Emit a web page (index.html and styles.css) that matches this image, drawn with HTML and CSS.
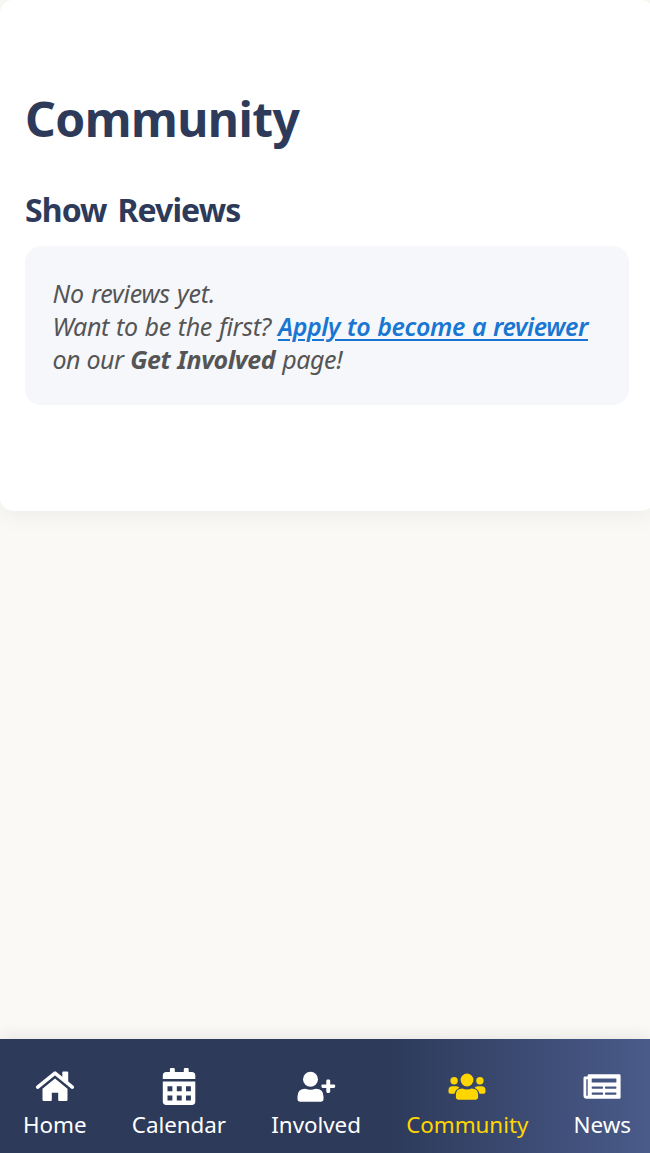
FILE: index.html
```html
<!DOCTYPE html>
<html lang="en">
<head>
<meta charset="utf-8">
<title>Community</title>
<link rel="stylesheet" href="styles.css">
</head>
<body>
<main class="card">
  <h1 class="title">Community</h1>
  <h2 class="subtitle">Show Reviews</h2>
  <div class="notice">
    <div class="line-empty">No reviews yet.</div>
    <div><span class="question">Want to be the first?</span> <a class="apply" href="#">Apply to become a reviewer</a></div>
    <div><span class="on-our">on our</span> <strong class="involved">Get Involved</strong> <span class="page">page!</span></div>
  </div>
</main>
<nav class="nav">
  <a class="item home" href="#">
    <svg class="icon" viewBox="0 0 40 40"><path d="M2.7 20.2 20 6.1l17.3 14.1" fill="none" stroke="currentColor" stroke-width="3.6" stroke-linecap="round" stroke-linejoin="round"/><path d="M27.3 5.3q0-.9.9-.9h4.1q.9 0 .9.9v12.4L27.3 13zM20 11.4 32.5 21.8v10.9q0 1.2-1.2 1.2h-7.2q-.9 0-.9-.9v-7.2h-6.4V33q0 .9-.9.9H8.7q-1.2 0-1.2-1.2V21.8z"/></svg>
    <span class="label">Home</span>
  </a>
  <a class="item calendar" href="#">
    <svg class="icon" viewBox="0 0 40 40"><path fill-rule="evenodd" d="M10.9 5.1V2.2q0-1.1 1.1-1.1h2.7q1.1 0 1.1 1.1v2.9h9V2.2q0-1.1 1.1-1.1h2.7q1.1 0 1.1 1.1v2.9h3.1q3.5 0 3.5 3.5v3.5H3.8V8.6q0-3.5 3.5-3.5zM3.8 14.6h32.5v20q0 3.4-3.5 3.4H7.3q-3.5 0-3.5-3.4zm4.7 4.7v5h4.9v-5zm9.3 0v5h4.9v-5zm9.2 0v5h4.9v-5zM8.5 28.5v5h4.9v-5zm9.3 0v5h4.9v-5zm9.2 0v5h4.9v-5z"/></svg>
    <span class="label">Calendar</span>
  </a>
  <a class="item join" href="#">
    <svg class="icon" viewBox="0 0 40 40"><circle cx="14.5" cy="12.2" r="7.5"/><path d="M1.5 32v-2.3q0-7.9 7.8-7.9 5.2 1.8 10.4 0 7.8 0 7.8 7.9V32q0 2.7-2.8 2.7H4.3q-2.8 0-2.8-2.7zM30.3 17.4v-3.6q0-1.3 1.3-1.3h1.3q1.3 0 1.3 1.3v3.6h3.7q1.3 0 1.3 1.2v1q0 1.3-1.3 1.3h-3.7v3.7q0 1.3-1.3 1.3h-1.3q-1.3 0-1.3-1.3v-3.7h-3.6q-1.3 0-1.3-1.3v-1q0-1.2 1.3-1.2z"/></svg>
    <span class="label">Involved</span>
  </a>
  <a class="item active" href="#">
    <svg class="icon" viewBox="0 0 40 40"><circle cx="20" cy="13" r="6.4"/><circle cx="7.1" cy="13.8" r="3.7"/><circle cx="32.9" cy="13.8" r="3.7"/><path d="M8.9 30.3v-2.5q0-6.4 6.4-6.4 4.7 2 9.4 0 6.4 0 6.4 6.4v2.5q0 2.4-2.4 2.4H11.3q-2.4 0-2.4-2.4zM1.5 25v-1.8q0-4 4-4h3.8q2 0 3.2 1.5-4.3 2-5 6.1H3.3q-1.8 0-1.8-1.8zM38.5 25v-1.8q0-4-4-4h-3.8q-2 0-3.2 1.5 4.3 2 5 6.1h4.2q1.8 0 1.8-1.8z"/></svg>
    <span class="label">Community</span>
  </a>
  <a class="item news" href="#">
    <svg class="icon" viewBox="0 0 40 40"><path fill-rule="evenodd" d="M7 7.3h30.2q1.4 0 1.4 1.4v21.7q0 1.4-1.4 1.4H4.8q-3.3 0-3.3-3.3V10.9q0-1.4 1.4-1.4h2.7V8.7Q5.6 7.3 7 7.3zM4.3 12.3v16q0 .8.7.8t.7-.8v-16zm6.1-.9q-.7 0-.7.7v2.8q0 .7.7.7h23.3q.7 0 .7-.7v-2.8q0-.7-.7-.7zm0 8q-.7 0-.7.7v1q0 .7.7.7h10q.7 0 .7-.7v-1q0-.7-.7-.7zm13.3 0q-.7 0-.7.7v1q0 .7.7.7h10q.7 0 .7-.7v-1q0-.7-.7-.7zm-13.3 6q-.7 0-.7.7v1q0 .7.7.7h10q.7 0 .7-.7v-1q0-.7-.7-.7zm13.3 0q-.7 0-.7.7v1q0 .7.7.7h10q.7 0 .7-.7v-1q0-.7-.7-.7z"/></svg>
    <span class="label">News</span>
  </a>
</nav>
</body>
</html>
```
FILE: styles.css
```css
* { box-sizing: border-box; }
html { height: 100%; overflow: hidden; }
body {
  margin: 0;
  height: 100%;
  overflow: hidden;
  display: flex;
  flex-direction: column;
  justify-content: space-between;
  background: #faf9f6;
  font-family: "Noto Sans", "Open Sans", sans-serif;
}
.card {
  width: 654px;
  height: 511px;
  padding: 84px 25px 0;
  background: #fff;
  border-radius: 13px;
  box-shadow: 0 4px 25px rgba(0, 0, 0, 0.06);
  color: #2d3a5a;
}
.title { margin: 0; font-size: 48px; line-height: 70px; letter-spacing: -0.55px; }
.subtitle { margin: 35px 0 0; font-size: 32px; line-height: 42px; letter-spacing: -0.9px; word-spacing: 3.4px; }
.notice {
  margin-top: 15px;
  height: 159px;
  padding: 31px 27.5px;
  border-radius: 16px;
  background: #f5f7fb;
  color: #555;
  font-size: 25px;
  font-style: italic;
  line-height: 33px;
  letter-spacing: -0.4px;
  word-spacing: 0.8px;
  white-space: nowrap;
}
.line-empty { letter-spacing: -0.2px; }
.question { letter-spacing: -0.35px; }
.on-our { letter-spacing: -0.6px; }
.apply {
  color: #1976d2;
  font-weight: 600;
  letter-spacing: -0.37px;
  text-decoration-thickness: 2px;
  text-underline-offset: 3px;
}
.nav {
  height: 114px;
  padding: 28px 19px 0 23px;
  display: flex;
  justify-content: space-between;
  background: linear-gradient(90deg, #2d3a5a 60%, #4a5b8a 100%);
  box-shadow: 0 -2px 16px rgba(0, 0, 0, 0.09);
}
.item {
  display: flex;
  flex-direction: column;
  align-items: center;
  color: #fff;
  text-decoration: none;
}
.icon { display: block; width: 40px; height: 40px; fill: currentColor; }
.label { margin-top: 2px; font-size: 22.4px; line-height: 32px; letter-spacing: -0.04px; white-space: nowrap; }
.active { color: #ffd600; }
```
